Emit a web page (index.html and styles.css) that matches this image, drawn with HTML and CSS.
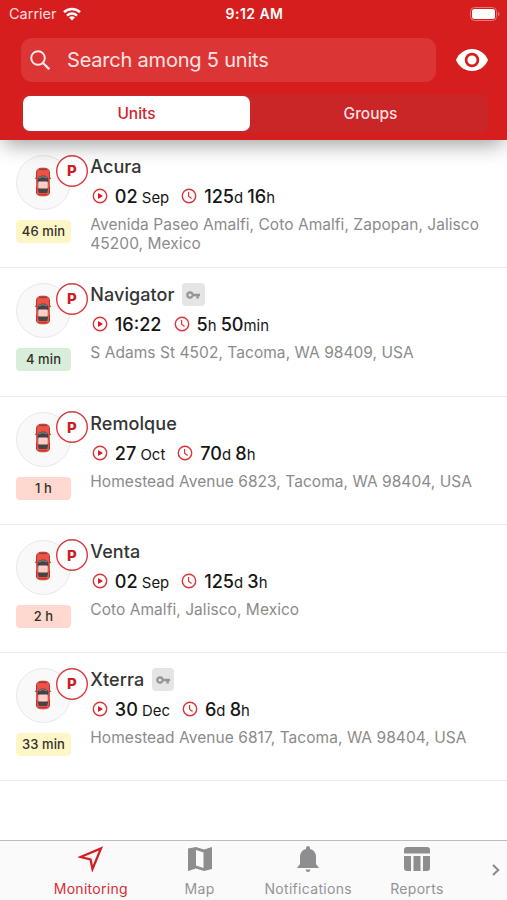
FILE: index.html
```html
<!DOCTYPE html>
<html lang="en">
<head>
<meta charset="utf-8">
<title>Monitoring</title>
<link rel="stylesheet" href="styles.css">
</head>
<body>
<svg class="sprite" aria-hidden="true">
  <symbol id="car" viewBox="0 0 18 30">
    <path d="M.5 11.500l3-2.500v3.500zM17.500 11.500l-3-2.500v3.500z" fill="#cf3a32"/>
    <path d="M2 5h2v5H2zM14 5h2v5h-2zM2 20h2v6H2zM14 20h2v6h-2z" fill="#5b2b27"/>
    <path d="M2.500 4Q3.500 1 9 1t6.500 3v22q0 3-6.500 3t-6.500-3z" fill="#ee5148" stroke="#b4352e" stroke-width=".6"/>
    <path d="M5 2.200h8" stroke="#742d29" stroke-width="1"/>
    <path d="M3.500 12Q5 8.500 9 8.500t5.500 3.500L13.500 24h-9z" fill="#434247"/>
    <path d="M5 11q4-2.500 8 0" fill="none" stroke="#85858a" stroke-width="1.200"/>
    <rect x="4.200" y="14.500" width="9.600" height="7" rx="1" fill="#ffcdc2"/>
    <path d="M4 22.500h10l-1 3.500H5z" fill="#484345"/>
    <path d="M5 27.500h8" stroke="#cb3029" stroke-width="1"/>
  </symbol>
  <symbol id="play" viewBox="0 0 16 16">
    <circle cx="8" cy="8" r="6.700" fill="none" stroke="#dc343b" stroke-width="1.400"/>
    <path d="M6 5l5 3-5 3z" fill="#d51d23"/>
  </symbol>
  <symbol id="clock" viewBox="0 0 16 16">
    <circle cx="8" cy="8" r="6.700" fill="none" stroke="#dc343b" stroke-width="1.400"/>
    <path d="M7.600 4v4.300l3 2.200" fill="none" stroke="#dc343b" stroke-width="1.200"/>
  </symbol>
  <symbol id="key" viewBox="0 0 14 8">
    <path fill-rule="evenodd" d="M7.500 2.700H14v2.600h-1.200V7.500h-2.400V5.300H7.500a3.800 3.800 0 1 1 0-2.600zM4 2.400a1.600 1.600 0 1 0 0 3.200 1.600 1.600 0 0 0 0-3.200z" fill="#959595"/>
  </symbol>
</svg>
<div class="app">
  <header class="header">
    <div class="status-bar">
      <div class="carrier"><span>Carrier</span>
        <svg width="18" height="14" viewBox="0 0 18 14" fill="none" stroke="#fff" stroke-width="2.500"><path d="M1 5.200a11.500 11.500 0 0 1 16 0M4 8.600a7.200 7.200 0 0 1 10 0"/><path d="M9 13.600l-3-3a4.300 4.300 0 0 1 6 0z" fill="#fff" stroke="none"/></svg>
      </div>
      <span class="time">9:12 AM</span>
      <svg class="battery" width="30" height="14" viewBox="0 0 30 14"><rect x=".5" y=".5" width="26" height="13" rx="4" fill="none" stroke="#e77777"/><rect x="2" y="2" width="23" height="10" rx="2.500" fill="#fff"/><path d="M28 4.500q3 2.500 0 5z" fill="#e77777"/></svg>
    </div>
    <div class="search-row">
      <div class="search">
        <svg width="20" height="20" viewBox="0 0 20 20" fill="none" stroke="#ffe9e9" stroke-width="1.900"><circle cx="8" cy="8" r="6.800"/><path d="M13 13l6.300 6.300" stroke-width="2.300"/></svg>
        <span>Search among 5 units</span>
      </div>
      <svg class="eye" width="32" height="22" viewBox="0 0 32 22"><path d="M0 11C3 4 9 0 16 0s13 4 16 11c-3 7-9 11-16 11S3 18 0 11z" fill="#fff"/><circle cx="16" cy="11" r="5.900" fill="none" stroke="#d71e1f" stroke-width="2.700"/></svg>
    </div>
    <div class="tabs"><div class="tab tab-active">Units</div><div class="tab tab-groups">Groups</div></div>
  </header>
  <main class="list">
    <article class="unit">
      <div class="side"><div class="avatar"><svg width="18" height="30"><use href="#car"/></svg><b class="parking">P</b></div><div class="age yellow">46 min</div></div>
      <div class="info"><div class="title"><span>Acura</span></div>
        <div class="times"><svg><use href="#play"/></svg><span class="start"><b>02</b> Sep</span><svg><use href="#clock"/></svg><span><b>125</b>d <b>16</b>h</span></div>
        <div class="address">Avenida Paseo Amalfi, Coto Amalfi, Zapopan, Jalisco 45200, Mexico</div></div>
    </article>
    <article class="unit">
      <div class="side"><div class="avatar"><svg width="18" height="30"><use href="#car"/></svg><b class="parking">P</b></div><div class="age green">4 min</div></div>
      <div class="info"><div class="title"><span>Navigator</span><i class="key"><svg width="14" height="8"><use href="#key"/></svg></i></div>
        <div class="times"><svg><use href="#play"/></svg><span class="start"><b>16:22</b></span><svg><use href="#clock"/></svg><span><b>5</b>h <b>50</b>min</span></div>
        <div class="address">S Adams St 4502, Tacoma, WA 98409, USA</div></div>
    </article>
    <article class="unit">
      <div class="side"><div class="avatar"><svg width="18" height="30"><use href="#car"/></svg><b class="parking">P</b></div><div class="age coral">1 h</div></div>
      <div class="info"><div class="title"><span>Remolque</span></div>
        <div class="times"><svg><use href="#play"/></svg><span class="start"><b>27</b> Oct</span><svg><use href="#clock"/></svg><span><b>70</b>d <b>8</b>h</span></div>
        <div class="address">Homestead Avenue 6823, Tacoma, WA 98404, USA</div></div>
    </article>
    <article class="unit">
      <div class="side"><div class="avatar"><svg width="18" height="30"><use href="#car"/></svg><b class="parking">P</b></div><div class="age coral">2 h</div></div>
      <div class="info"><div class="title"><span>Venta</span></div>
        <div class="times"><svg><use href="#play"/></svg><span class="start"><b>02</b> Sep</span><svg><use href="#clock"/></svg><span><b>125</b>d <b>3</b>h</span></div>
        <div class="address">Coto Amalfi, Jalisco, Mexico</div></div>
    </article>
    <article class="unit">
      <div class="side"><div class="avatar"><svg width="18" height="30"><use href="#car"/></svg><b class="parking">P</b></div><div class="age yellow">33 min</div></div>
      <div class="info"><div class="title"><span>Xterra</span><i class="key"><svg width="14" height="8"><use href="#key"/></svg></i></div>
        <div class="times"><svg><use href="#play"/></svg><span class="start"><b>30</b> Dec</span><svg><use href="#clock"/></svg><span><b>6</b>d <b>8</b>h</span></div>
        <div class="address">Homestead Avenue 6817, Tacoma, WA 98404, USA</div></div>
    </article>
  </main>
  <nav class="nav">
    <div class="nav-item nav-active"><svg width="26" height="26" viewBox="0 0 26 26"><path d="M2.500 11L23 2.500 14.500 23l-2-9.500z" fill="none" stroke="#d41e25" stroke-width="2.300"/></svg><span>Monitoring</span></div>
    <div class="nav-item"><svg width="26" height="26" viewBox="0 0 26 26"><path fill-rule="evenodd" d="M1 2.500L9 1l8 2.500L25 1v22l-8 2-8-2.500L1 25zM9 4v15.500l7.500 2.500V6.500z" fill="#8e8e90"/></svg><span>Map</span></div>
    <div class="nav-item"><svg width="26" height="26" viewBox="0 0 26 26"><path d="M11 3V2q0-2 2-2t2 2v1c4 1 6 4 6 8v7l3 4H2l3-4v-7c0-4 2-7 6-8zM10.500 23.500h5q-.5 2.500-2.500 2.500t-2.500-2.500z" fill="#8e8e90"/></svg><span>Notifications</span></div>
    <div class="nav-item"><svg width="26" height="26" viewBox="0 0 26 26" fill="#8e8e90"><path d="M3 1h20q3 0 3 3v3.500H0V4q0-3 3-3zM0 10h7v15H3q-3 0-3-3zM9.500 10h7v15h-7zM19 10h7v12q0 3-3 3h-4z"/></svg><span>Reports</span></div>
    <div class="more"><svg width="8" height="12" viewBox="0 0 8 12"><path d="M1 1l5.300 5L1 11" fill="none" stroke="#858588" stroke-width="1.800"/></svg></div>
  </nav>
</div>
</body>
</html>
```
FILE: styles.css
```css
* { box-sizing: border-box; }
body { margin: 0; background: #fff; font-family: Inter, "Liberation Sans", sans-serif; }
svg { display: block; flex: none; }
.sprite { position: absolute; width: 0; height: 0; }
.app { width: 507px; height: 900px; display: flex; flex-direction: column; overflow: hidden; }
.header { height: 140px; flex: none; background: #d71e1f; box-shadow: 0 8px 20px -4px rgba(0,0,0,.4); z-index: 1; }
.status-bar { height: 38px; padding: 0 7px 11px 9px; display: grid; grid-template-columns: 1fr auto 1fr; align-items: center; color: #fff; }
.carrier { display: flex; align-items: center; gap: 6px; color: #ffdede; font-size: 14.500px; }
.time { font-weight: 600; font-size: 14px; letter-spacing: .45px; }
.battery { justify-self: end; }
.search-row { display: flex; align-items: center; padding: 0 19px 0 21px; justify-content: space-between; }
.search { width: 415px; height: 44px; border-radius: 11px; background: #db3635; color: #ffe3e3; display: flex; align-items: center; gap: 17px; padding-left: 9px; font-size: 20px; letter-spacing: -.2px; }
.tabs { margin: 12px 19px 0 21px; height: 39px; padding: 2px 0 2px 2px; display: grid; grid-template-columns: 227px 1fr; border-radius: 8px; background: #ca2627; }
.tab { display: flex; align-items: center; justify-content: center; color: #ffdfdf; font-size: 15.500px; font-weight: 500; }
.tab-groups { padding-left: 3px; }
.tab-active { background: #fff; color: #d22429; border-radius: 7px; }
.list { flex: 1; }
.unit { height: 128.250px; padding: 15px 16px 0; border-bottom: 1px solid #ececec; display: flex; }
.side { width: 74.300px; flex: none; }
.avatar { position: relative; width: 55px; height: 55px; border: 1px solid #e8e8e8; border-radius: 50%; background: #f9f9f9; display: flex; align-items: center; justify-content: center; }
.avatar > svg { margin: 0 2px 2px 0; }
.parking { position: absolute; left: 39px; top: -1.300px; width: 32px; height: 32px; box-shadow: inset 0 0 0 1.400px #d83a42; border-radius: 50%; background: #fff; color: #cf1e26; display: flex; align-items: center; justify-content: center; font-size: 15px; font-weight: 800; }
.age { margin-top: 10px; width: 55px; height: 23px; padding-bottom: 1px; border-radius: 4px; display: flex; align-items: center; justify-content: center; color: #302f28; font-size: 13px; font-weight: 500; letter-spacing: .1px; }
.yellow { background: #fff6c8; }
.green { background: #d9eeda; }
.coral { background: #ffd9d0; }
.info { flex: 1; min-width: 0; }
.title { height: 23px; display: flex; align-items: center; gap: 7.500px; color: #353535; font-size: 18px; font-weight: 500; letter-spacing: .08px; }
.key { width: 22.500px; height: 23px; border-radius: 4px; background: #e5e5e5; display: flex; align-items: center; justify-content: center; }
.times { height: 22px; margin-top: 7px; padding-left: 1.500px; display: flex; align-items: center; color: #161616; font-size: 14.900px; font-weight: 400; white-space: nowrap; }
.times svg { width: 16px; height: 16px; }
.times span { margin-left: 7px; }
.times .start { margin-right: 12px; }
.times b { font-size: 18.100px; font-weight: 550; }
.address { margin-top: 9px; margin-right: -6px; color: #8b8b8b; font-size: 15.500px; line-height: 18.500px; letter-spacing: .05px; }
.nav { height: 60px; flex: none; background: #fafafa; border-top: 1px solid #bcbcbc; display: grid; grid-template-columns: 108.700px 108.700px 108.700px 108.700px 1fr; padding-left: 36.500px; }
.nav-item { display: flex; flex-direction: column; align-items: center; padding-top: 5px; color: #949496; font-size: 14px; line-height: 18px; letter-spacing: .3px; gap: 8px; }
.nav-active { color: #d62d33; }
.more { padding: 23px 0 0 21px; }
```
